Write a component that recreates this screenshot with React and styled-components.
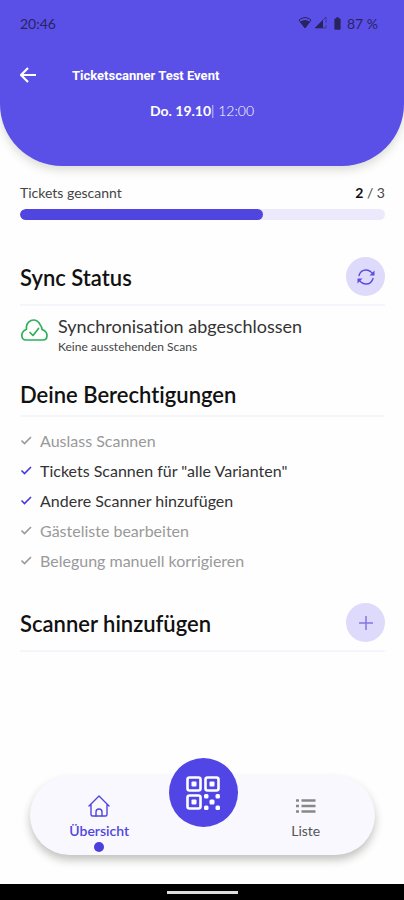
import React from "react";
import styled, { createGlobalStyle } from "styled-components";
import { MdBatteryFull } from "react-icons/md";

const GlobalStyle = createGlobalStyle`
  * {
    box-sizing: border-box;
  }

  body {
    margin: 0;
    background: #fefefe;
    color: #111;
    font-family: Lato, "Liberation Sans", sans-serif;
    font-variant-ligatures: none;
  }

  button {
    padding: 0;
    border: 0;
    background: none;
    color: inherit;
    font: inherit;
    cursor: pointer;
  }
`;

const Screen = styled.div`
  display: flex;
  flex-direction: column;
  min-height: 100vh;
`;

const Header = styled.header`
  height: 166px;
  padding: 14px 20px 0;
  border-radius: 0 0 62px 62px;
  background: #5a50e8;
  color: #fff;
  box-shadow: 0 4px 10px rgba(60, 60, 40, 0.18);
`;

const StatusBar = styled.div`
  display: flex;
  justify-content: space-between;
  align-items: center;
  height: 18px;
  padding-right: 6px;
  color: #28245f;
  font-size: 14px;
`;

const StatusIcons = styled.div`
  display: flex;
  align-items: center;

  svg {
    margin-right: 2px;
  }
`;

const TitleRow = styled.div`
  display: flex;
  align-items: center;
  gap: 36px;
  height: 20px;
  margin-top: 33px;
`;

const BackButton = styled.button`
  display: flex;
`;

const Title = styled.h1`
  margin: 0;
  font-family: Roboto, sans-serif;
  font-size: 13px;
  font-weight: 700;
`;

const EventDate = styled.p`
  margin: 16px 0 0;
  font-size: 14px;
  line-height: 20px;
  text-align: center;
`;

const Time = styled.span`
  font-weight: 300;
`;

const Content = styled.main`
  flex: 1;
  padding: 17px 19px 0 20px;
`;

const ProgressLabel = styled.label`
  display: flex;
  justify-content: space-between;
  font-size: 14px;
  line-height: 20px;
  color: #444;

  strong {
    color: #111;
  }
`;

const ProgressBar = styled.progress`
  display: block;
  width: 100%;
  height: 11px;
  margin-top: 6px;
  border: 0;
  border-radius: 6px;
  background: #ebe9fb;
  appearance: none;
  overflow: hidden;

  &::-webkit-progress-bar {
    background: #ebe9fb;
  }

  &::-webkit-progress-value {
    border-radius: 6px;
    background: #5145e0;
  }
`;

const SectionHeader = styled.div`
  display: flex;
  justify-content: space-between;
  align-items: center;
  height: ${(props) => props.$height};
  margin-top: ${(props) => props.$top};
  padding-bottom: 8px;
  border-bottom: 2px solid #f5f5fc;
`;

const SectionTitle = styled.h2`
  margin: 0;
  padding-top: 2px;
  font-size: 22px;
  font-weight: 600;
  line-height: 28px;
`;

const RoundButton = styled.button`
  display: flex;
  justify-content: center;
  align-items: center;
  width: 39px;
  height: 39px;
  border-radius: 50%;
  background: #dedafb;
  color: #5a4ddc;
`;

const SyncStatus = styled.div`
  display: flex;
  gap: 10px;
  padding-top: 8px;

  svg {
    margin-top: 4px;
    color: #2fae5c;
  }
`;

const SyncText = styled.div`
  font-size: 18px;
  line-height: 24px;
  color: #333;
`;

const SyncHint = styled.div`
  font-size: 12px;
  line-height: 18px;
  color: #444;
`;

const Permissions = styled.ul`
  margin: 8px 0 0;
  padding: 0;
  list-style: none;
`;

const Permission = styled.li`
  display: flex;
  align-items: center;
  gap: 7px;
  height: 30px;
  font-size: 16px;
  color: ${(props) => (props.$granted ? "#333" : "#999")};

  svg {
    color: ${(props) => (props.$granted ? "#4638e0" : "#999")};
  }
`;

const TabBar = styled.nav`
  display: grid;
  grid-template-columns: 1fr 68px 1fr;
  height: 79px;
  margin: 0 29px 29px 30px;
  border-radius: 40px;
  background: #f8f8fe;
  box-shadow: 0 5px 8px rgba(40, 40, 30, 0.28);
`;

const Tab = styled.button`
  display: flex;
  flex-direction: column;
  align-items: center;
  gap: 5px;
  padding-top: 19px;
  font-size: 14px;
  font-weight: ${(props) => (props.$active ? 600 : 400)};
  line-height: 18px;
  color: ${(props) => (props.$active ? "#5145e0" : "#555")};
`;

const ActiveDot = styled.span`
  width: 10px;
  height: 10px;
  margin-top: -3px;
  border-radius: 50%;
  background: #4a3edc;
`;

const ScanButton = styled.button`
  display: flex;
  justify-content: center;
  align-items: center;
  width: 69px;
  height: 69px;
  margin-top: -18px;
  border-radius: 50%;
  background: #5145e6;
  color: #fff;
`;

const SystemBar = styled.div`
  display: flex;
  justify-content: center;
  align-items: center;
  height: 16px;
  background: #000;

  span {
    width: 71px;
    height: 3px;
    background: #ddd;
  }
`;

const WifiIcon = () => (
  <svg width="14" height="14" viewBox="0 0 14 14" fill="none">
    <path d="M1 4Q7-1 13 4L7 12Z" stroke="currentColor" />
    <path d="M2 6Q7 2 12 6L7 12Z" fill="currentColor" />
  </svg>
);

const SignalIcon = () => (
  <svg width="14" height="14" viewBox="0 0 14 14" fill="none">
    <path d="M1 12L9 4V12Z" fill="currentColor" />
    <path d="M1 12L12 1V7M12 9V12H1" stroke="currentColor" opacity="0.6" />
  </svg>
);

const BackIcon = () => (
  <svg width="16" height="16" viewBox="0 0 16 16" fill="none">
    <path
      d="M8 1L1 8L8 15M1 8H16"
      stroke="currentColor"
      strokeWidth="2.2"
    />
  </svg>
);

const SyncIcon = () => (
  <svg width="20" height="18" viewBox="0 0 20 18" fill="none">
    <path
      d="M3 7.5C4 4 7 2 10 2C13 2 15 3.5 17 6M17 10.5C16 14 13 16 10 16C7 16 5 14.5 3 12"
      stroke="currentColor"
      strokeWidth="1.4"
      strokeLinecap="round"
    />
    <path d="M18.5 2.5V7.5H13.5ZM1.5 15.5V10.5H6.5Z" fill="currentColor" />
  </svg>
);

const PlusIcon = () => (
  <svg width="16" height="16" viewBox="0 0 16 16">
    <path
      d="M8 1V15M1 8H15"
      stroke="currentColor"
      strokeWidth="1.5"
      opacity="0.7"
    />
  </svg>
);

const CloudDoneIcon = () => (
  <svg
    width="28"
    height="24"
    viewBox="0 0 28 24"
    fill="none"
    stroke="currentColor"
    strokeWidth="1.7"
    strokeLinecap="round"
    strokeLinejoin="round"
  >
    <path d="M6 22H23C25.5 22 27 20 27 17.5C27 14.5 25 12.5 22 11.5C22 9.5 21.3 8 20 6.5C18.5 3.5 16.5 2 13.5 2C10 2 7 5 6.5 8.5C6.4 9.5 6.4 10.3 6.5 11.2C3.5 12.5 1.8 14.5 1.8 17.5C1.8 20 3.5 22 6 22Z" />
    <path d="M10 14.5L13 17.5L18.5 10.5" />
  </svg>
);

const CheckIcon = () => (
  <svg width="13" height="12" viewBox="0 0 13 12" fill="none">
    <path d="M1.5 6.5L4.5 9.5L11 3" stroke="currentColor" strokeWidth="1.6" />
  </svg>
);

const HomeIcon = () => (
  <svg
    width="22"
    height="22"
    viewBox="0 0 22 22"
    fill="none"
    stroke="currentColor"
    strokeWidth="1.4"
    strokeLinejoin="round"
    strokeLinecap="round"
  >
    <path d="M1 11L11 1L21 11M3 9.5V19.5Q3 21 4.500 21H17.5Q19 21 19 19.5V9.5" />
    <path d="M8 21V17Q8 14 11 14Q14 14 14 17V21" />
  </svg>
);

const QrIcon = () => (
  <svg width="34" height="34" viewBox="0 0 34 34" fill="none">
    <g stroke="currentColor" strokeWidth="2.6">
      <rect x="1.5" y="1.5" width="13" height="13" rx="2" />
      <rect x="19.5" y="1.5" width="13" height="13" rx="2" />
      <rect x="1.5" y="19.5" width="13" height="13" rx="2" />
    </g>
    <g fill="currentColor">
      <rect x="5.5" y="5.5" width="5" height="5" rx="1" />
      <rect x="23.5" y="5.5" width="5" height="5" rx="1" />
      <rect x="5.5" y="23.5" width="5" height="5" rx="1" />
      <rect x="18" y="18" width="4.5" height="4.5" rx="1.5" />
      <rect x="29.5" y="18" width="4.5" height="4.5" rx="1.5" />
      <rect x="23.5" y="23.5" width="5" height="5" rx="1.5" />
      <rect x="18" y="29.5" width="4.5" height="4.5" rx="1.5" />
      <rect x="29.5" y="29.5" width="4.5" height="4.5" rx="1.5" />
    </g>
  </svg>
);

const ListIcon = () => (
  <svg width="22" height="22" viewBox="0 0 22 22">
    <path
      d="M1 5.5H4M6.5 5.5H20.5M1 11H4M6.5 11H20.5M1 16.5H4M6.5 16.5H20.5"
      stroke="#888"
      strokeWidth="2.4"
    />
  </svg>
);

const permissions = [
  { label: "Auslass Scannen", granted: false },
  { label: 'Tickets Scannen für "alle Varianten"', granted: true },
  { label: "Andere Scanner hinzufügen", granted: true },
  { label: "Gästeliste bearbeiten", granted: false },
  { label: "Belegung manuell korrigieren", granted: false },
];

const App = () => {
  return (
    <Screen>
      <GlobalStyle />
      <Header>
        <StatusBar>
          <span>20:46</span>
          <StatusIcons>
            <WifiIcon />
            <SignalIcon />
            <MdBatteryFull size={15} />
            <span>87 %</span>
          </StatusIcons>
        </StatusBar>
        <TitleRow>
          <BackButton aria-label="Zurück">
            <BackIcon />
          </BackButton>
          <Title>Ticketscanner Test Event</Title>
        </TitleRow>
        <EventDate>
          <strong>Do. 19.10</strong>
          <Time>| 12:00</Time>
        </EventDate>
      </Header>

      <Content>
        <ProgressLabel htmlFor="scanned">
          <span>Tickets gescannt</span>
          <span>
            <strong>2</strong> / 3
          </span>
        </ProgressLabel>
        <ProgressBar id="scanned" value={2} max={3} />

        <SectionHeader $height="49px" $top="37px">
          <SectionTitle>Sync Status</SectionTitle>
          <RoundButton aria-label="Synchronisieren">
            <SyncIcon />
          </RoundButton>
        </SectionHeader>
        <SyncStatus>
          <CloudDoneIcon />
          <div>
            <SyncText>Synchronisation abgeschlossen</SyncText>
            <SyncHint>Keine ausstehenden Scans</SyncHint>
          </div>
        </SyncStatus>

        <SectionHeader $height="36px" $top="25px">
          <SectionTitle>Deine Berechtigungen</SectionTitle>
        </SectionHeader>
        <Permissions>
          {permissions.map(({ label, granted }) => (
            <Permission key={label} $granted={granted}>
              <CheckIcon />
              <span>{label}</span>
            </Permission>
          ))}
        </Permissions>

        <SectionHeader $height="49px" $top="28px">
          <SectionTitle>Scanner hinzufügen</SectionTitle>
          <RoundButton aria-label="Scanner hinzufügen">
            <PlusIcon />
          </RoundButton>
        </SectionHeader>
      </Content>

      <TabBar>
        <Tab $active>
          <HomeIcon />
          Übersicht
          <ActiveDot />
        </Tab>
        <ScanButton aria-label="Scannen">
          <QrIcon />
        </ScanButton>
        <Tab>
          <ListIcon />
          Liste
        </Tab>
      </TabBar>
      <SystemBar>
        <span />
      </SystemBar>
    </Screen>
  );
};

export default App;
